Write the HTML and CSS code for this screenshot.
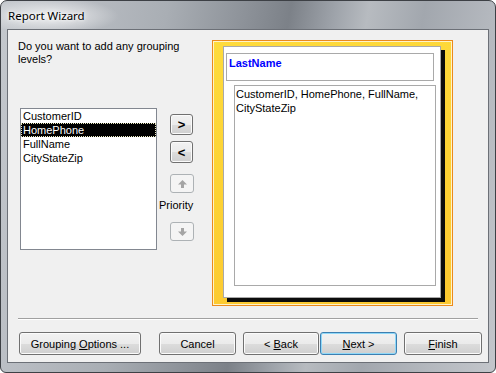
FILE: index.html
```html
<!DOCTYPE html>
<html>
<head>
<meta charset="utf-8">
<link rel="stylesheet" href="styles.css">
</head>
<body>
<div class="window">
  <div class="titlebar"><span class="title">Report Wizard</span></div>
  <div class="client">
    <div class="main">
      <div class="left">
        <div class="heading">Do you want to add any grouping<br>levels?</div>
        <div class="picker">
          <div class="listbox">
            <div class="item">CustomerID</div>
            <div class="item selected">HomePhone</div>
            <div class="item">FullName</div>
            <div class="item">CityStateZip</div>
          </div>
          <div class="controls">
            <div class="btn arrow add"><span>&gt;</span></div>
            <div class="btn arrow remove"><span>&lt;</span></div>
            <div class="btn disabled up">
              <svg width="9" height="8" viewBox="0 0 9 8"><path d="M4.5 0 L9 4.5 L6 4.5 L6 8 L3 8 L3 4.5 L0 4.5 Z" fill="#a4a4a4"/></svg>
            </div>
            <div class="priority">Priority</div>
            <div class="btn disabled down">
              <svg width="9" height="8" viewBox="0 0 9 8"><path d="M4.5 8 L9 3.5 L6 3.5 L6 0 L3 0 L3 3.5 L0 3.5 Z" fill="#a4a4a4"/></svg>
            </div>
          </div>
        </div>
      </div>
      <div class="preview">
        <div class="page">
          <div class="group-box">LastName</div>
          <div class="detail-box">CustomerID, HomePhone, FullName,<br>CityStateZip</div>
        </div>
      </div>
    </div>
    <div class="separator"></div>
    <div class="buttons">
      <div class="btn cmd grouping"><span>Grouping <u>O</u>ptions ...</span></div>
      <div class="btn cmd cancel"><span>Cancel</span></div>
      <div class="btn cmd back"><span>&lt; <u>B</u>ack</span></div>
      <div class="btn cmd next default"><span><u>N</u>ext &gt;</span></div>
      <div class="btn cmd finish"><span><u>F</u>inish</span></div>
    </div>
  </div>
</div>
</body>
</html>
```
FILE: styles.css
```css
html, body {
  margin: 0;
  padding: 0;
  width: 496px;
  height: 373px;
  overflow: hidden;
  background: #ffffff;
}
.window {
  width: 496px;
  height: 373px;
  box-sizing: border-box;
  border: 1px solid #3d4045;
  border-radius: 7px 7px 6px 6px;
  background: linear-gradient(100deg, #c4c8cd 0%, #b9bdc3 14%, #a9aeb4 30%, #8d9299 44%, #7c8188 52%, #9ea3aa 60%, #b7bbc0 66%, #a2a7ae 76%, #b4b8be 88%, #c3c6cb 100%);
  display: flex;
  flex-direction: column;
  font-family: "Liberation Sans", Arial, sans-serif;
  font-size: 11px;
  color: #000;
}
.titlebar {
  height: 28px;
  display: flex;
  align-items: center;
  padding-left: 7px;
  background: radial-gradient(ellipse 70px 18px at 48px 15px, rgba(255,255,255,0.75), rgba(255,255,255,0) 100%);
}
.title {
  font-family: "Noto Sans", "Open Sans", sans-serif;
  font-size: 11.5px;
  color: #000;
  text-shadow: 0 0 6px #fff, 0 0 3px #fff;
  margin-top: 1px;
}
.client {
  margin: 0 6px 0 6px;
  height: 334px;
  box-sizing: border-box;
  border: 1px solid #6c7077;
  background: #f0f0f0;
  padding: 10px 0 0 10px;
  display: flex;
  flex-direction: column;
}
.main {
  display: flex;
  height: 266px;
}
.left {
  width: 194px;
  display: flex;
  flex-direction: column;
}
.heading {
  line-height: 13px;
  margin-top: 0px;
}
.picker {
  display: flex;
  margin-top: 42px;
  margin-left: 2px;
}
.listbox {
  width: 137px;
  height: 142px;
  box-sizing: border-box;
  border: 1px solid #828790;
  background: #fff;
}
.item {
  height: 14px;
  line-height: 14px;
  padding-left: 2px;
  color: #000;
  box-sizing: border-box;
}
.item.selected {
  background: #000;
  color: #fff;
  outline: 1px dotted #e8e8c0;
  outline-offset: -1px;
}
.controls {
  display: flex;
  flex-direction: column;
  margin-left: 2px;
  width: 40px;
}
.btn {
  box-sizing: border-box;
  border: 1px solid #707070;
  border-radius: 3px;
  background: linear-gradient(#f2f2f2 0%, #ebebeb 50%, #dddddd 50%, #cfcfcf 100%);
  box-shadow: inset 0 0 0 1px #fbfbfb;
  display: flex;
  align-items: center;
  justify-content: center;
  color: #000;
  white-space: pre;
}
.arrow {
  width: 23px;
  margin-left: 11px;
  font-size: 13px;
  font-weight: bold;
}
.add {
  height: 21px;
  margin-top: 6px;
}
.remove {
  height: 22px;
  margin-top: 6px;
}
.disabled {
  width: 24px;
  height: 19px;
  margin-left: 11px;
  border-color: #adb2b5;
  background: #f4f4f4;
  box-shadow: none;
}
.up {
  margin-top: 11px;
}
.priority {
  line-height: 13px;
  margin-top: 6px;
  color: #000;
}
.down {
  margin-top: 10px;
}
.preview {
  width: 241px;
  height: 266px;
  box-sizing: border-box;
  border: 1px solid #ec8a1c;
  box-shadow: inset 0 0 0 1px #fff3c8;
  background: linear-gradient(170deg, #fedb3c 0%, #fdd233 50%, #fcc830 100%);
  padding: 5px 0 0 10px;
}
.page {
  width: 218px;
  height: 252px;
  box-sizing: border-box;
  border: 1px solid #a9a9a9;
  background: #fff;
  box-shadow: 4px 4px 0 #0c0c0c;
  padding: 6px 0 0 2px;
  display: flex;
  flex-direction: column;
}
.group-box {
  width: 208px;
  height: 28px;
  box-sizing: border-box;
  border: 1px solid #a9a9a9;
  color: #0000ff;
  font-weight: bold;
  padding: 2px 0 0 2px;
  line-height: 14px;
}
.detail-box {
  width: 202px;
  height: 201px;
  box-sizing: border-box;
  border: 1px solid #a9a9a9;
  margin-top: 4px;
  margin-left: 8px;
  padding: 1px 0 0 1px;
  line-height: 14px;
}
.separator {
  width: 460px;
  height: 1px;
  background: #a0a0a0;
  border-bottom: 1px solid #ffffff;
  margin-top: 12px;
}
.buttons {
  display: flex;
  margin-top: 12px;
}
.cmd {
  height: 23px;
}
.grouping {
  width: 122px;
  margin-left: 1px;
}
.cancel {
  width: 77px;
  margin-left: 18px;
}
.back {
  width: 76px;
  margin-left: 7px;
}
.next {
  width: 77px;
  margin-left: 1px;
}
.finish {
  width: 78px;
  margin-left: 7px;
}
.default {
  border-color: #3c7fb1;
  box-shadow: inset 0 0 0 1px #8fd8f8;
}
u {
  text-decoration: underline;
  text-underline-offset: 1px;
}
```
